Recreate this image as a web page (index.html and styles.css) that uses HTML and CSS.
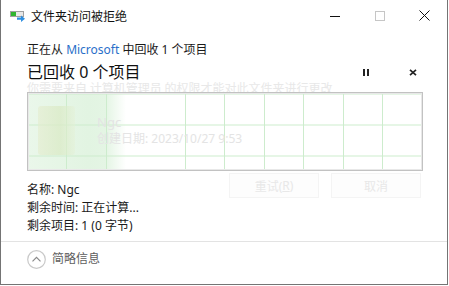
FILE: index.html
```html
<!DOCTYPE html>
<html lang="zh-CN">
<head>
<meta charset="utf-8">
<link rel="stylesheet" href="styles.css">
</head>
<body>
<div class="window">
  <div class="titlebar">
    <svg class="app-icon" width="16" height="11" viewBox="0 0 16 11">
      <rect x="0.5" y="0.5" width="13" height="5" fill="#e8e8e8" stroke="#a0a0a0"/>
      <rect x="1" y="1" width="5" height="4" fill="#2fb52f"/>
      <path d="M7 6.5h4V4.5l4 3.2-4 3.2V8.8H7z" fill="#2f8fe0"/>
    </svg>
    <span class="title">文件夹访问被拒绝</span>
    <div class="controls">
      <span class="ctl"><svg width="10" height="10" viewBox="0 0 10 10"><path d="M0 5.5h10" stroke="#111" stroke-width="1"/></svg></span>
      <span class="ctl"><svg width="10" height="10" viewBox="0 0 10 10"><rect x="0.5" y="0.5" width="9" height="9" fill="none" stroke="#c6c6c6"/></svg></span>
      <span class="ctl"><svg width="11" height="11" viewBox="0 0 11 11"><path d="M0.5 0.5l10 10M10.5 0.5l-10 10" stroke="#111" stroke-width="1"/></svg></span>
    </div>
  </div>
  <div class="content">
    <div class="from">正在从 <span class="link">Microsoft</span> 中回收 1 个项目</div>
    <div class="status-row">
      <div class="status">已回收 0 个项目</div>
      <div class="actions">
        <span class="act"><svg width="6" height="7" viewBox="0 0 6 7"><rect x="0" y="0" width="2" height="7" fill="#222"/><rect x="4" y="0" width="2" height="7" fill="#222"/></svg></span>
        <span class="act"><svg width="8" height="7" viewBox="0 0 8 7"><path d="M1 0.8l6 5.4M7 0.8l-6 5.4" stroke="#222" stroke-width="1.7"/></svg></span>
      </div>
    </div>
    <div class="ghost-msg">你需要来自 计算机管理员 的权限才能对此文件夹进行更改</div>
    <div class="graph">
      <div class="ghost-icon"></div>
      <div class="ghost-file">
        <div class="ghost-name">Ngc</div>
        <div class="ghost-date">创建日期: 2023/10/27 9:53</div>
      </div>
    </div>
    <div class="details-row">
      <div class="details">
        <div>名称: Ngc</div>
        <div>剩余时间: 正在计算...</div>
        <div>剩余项目: 1 (0 字节)</div>
      </div>
      <div class="ghost-buttons">
        <span class="ghost-btn">重试(<u>R</u>)</span>
        <span class="ghost-btn">取消</span>
      </div>
    </div>
  </div>
  <div class="sep"></div>
  <div class="footer">
    <svg class="more" width="19" height="19" viewBox="0 0 19 19">
      <circle cx="9.5" cy="9.5" r="8.8" fill="none" stroke="#c9c9c9" stroke-width="1.2"/>
      <path d="M5.5 11.3l4-4 4 4" fill="none" stroke="#8a8a8a" stroke-width="1.2"/>
    </svg>
    <span class="more-label">简略信息</span>
  </div>
</div>
</body>
</html>
```
FILE: styles.css
```css
html, body {
  margin: 0;
  padding: 0;
  background: #fff;
}
body {
  width: 449px;
  height: 286px;
  overflow: hidden;
  font-family: "Noto Sans", "Noto Sans CJK SC", sans-serif;
  font-size: 12px;
  color: #1a1a1a;
}
.window {
  box-sizing: border-box;
  width: 448px;
  height: 285px;
  border: 1px solid #747474;
  border-top: none;
  display: flex;
  flex-direction: column;
}
.titlebar {
  height: 31px;
  display: flex;
  align-items: center;
  flex-shrink: 0;
}
.app-icon {
  margin-left: 9px;
  margin-top: 2px;
}
.title {
  margin-left: 5px;
  font-size: 12px;
  line-height: 16px;
  color: #111;
  font-family: "Noto Sans CJK SC", sans-serif;
}
.controls {
  margin-left: auto;
  display: flex;
}
.ctl {
  width: 45px;
  height: 31px;
  display: flex;
  align-items: center;
  justify-content: center;
}
.content {
  padding: 11px 24px 0 26px;
  display: flex;
  flex-direction: column;
}
.from {
  line-height: 16px;
  color: #1a1a1a;
}
.link {
  color: #2a6fc9;
}
.status-row {
  margin-top: 5px;
  display: flex;
  align-items: center;
}
.status {
  font-size: 16px;
  line-height: 18px;
  color: #111;
}
.actions {
  margin-left: auto;
  display: flex;
  gap: 27px;
  margin-right: 0;
}
.act {
  width: 20px;
  height: 18px;
  display: flex;
  align-items: center;
  justify-content: center;
}
.ghost-msg {
  margin-top: 1px;
  line-height: 11px;
  color: #e8e8e8;
  font-family: "Noto Sans CJK SC", sans-serif;
  white-space: nowrap;
}
.graph {
  margin-top: -1px;
  height: 79px;
  box-sizing: border-box;
  border: 1px solid #c2c2c2;
  box-shadow: inset 0 0 0 1px #e8e8e8;
  display: flex;
  align-items: flex-start;
  background-image:
    repeating-linear-gradient(to right, transparent 0 38.5px, #cdeccd 38.5px 39.5px),
    repeating-linear-gradient(to bottom, transparent 0 14.5px, #cdeccd 14.5px 15.5px),
    linear-gradient(to right, #eaf7ea 0, #e2f4e2 60px, #e4f5e4 78px, rgba(255,255,255,0) 98px);
  background-position: 0 0, 0 1.5px, 0 0;
}
.ghost-icon {
  margin: 13px 0 0 10px;
  width: 37px;
  height: 49px;
  border-radius: 3px;
  background: linear-gradient(to right, rgba(228,236,206,0.6), rgba(218,234,198,0.75) 60%, rgba(228,240,214,0.45));
}
.ghost-file {
  margin: 22px 0 0 22px;
  color: #e4e4e4;
}
.ghost-name {
  font-size: 13px;
  line-height: 14px;
}
.ghost-date {
  margin-top: 3px;
  line-height: 14px;
  white-space: nowrap;
}
.details-row {
  display: flex;
  justify-content: space-between;
  align-items: flex-start;
}
.details {
  padding-top: 10px;
  line-height: 18px;
  color: #1a1a1a;
}
.ghost-buttons {
  margin-top: 2px;
  margin-right: 2px;
  display: flex;
  gap: 12px;
}
.ghost-btn {
  width: 90px;
  height: 25px;
  box-sizing: border-box;
  border: 1px solid #f4f4f4;
  background: #fdfdfd;
  color: #e8e8e8;
  display: flex;
  align-items: center;
  justify-content: center;
  font-size: 12px;
}
.ghost-btn u {
  text-decoration-color: #e8e8e8;
}
.sep {
  margin-top: 6px;
  height: 1px;
  background: #e3e3e3;
}
.footer {
  height: 34px;
  display: flex;
  align-items: center;
  padding-left: 26px;
}
.more-label {
  margin-left: 6px;
  color: #5e5e5e;
  line-height: 16px;
}
```
